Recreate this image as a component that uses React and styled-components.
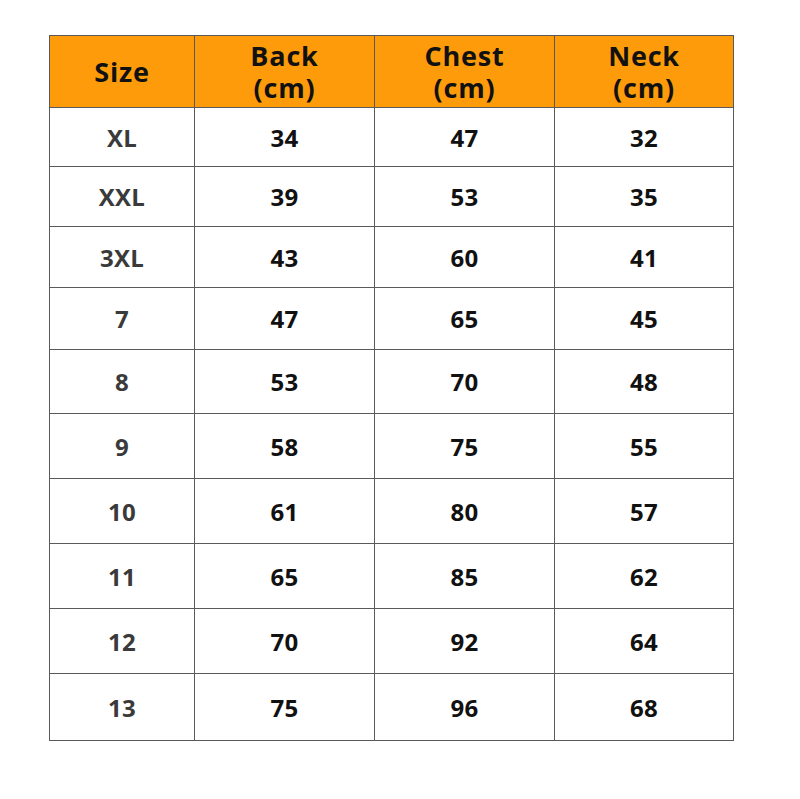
import React from 'react'
import styled, { createGlobalStyle } from 'styled-components'

const GlobalStyle = createGlobalStyle`
  html, body {
    margin: 0;
    padding: 0;
    background: #ffffff;
  }
  body {
    font-family: "Open Sans", "Noto Sans", "DejaVu Sans", sans-serif;
  }
`

const columns = [
  { label: 'Size', width: 145 },
  { label: 'Back\n(cm)', width: 180 },
  { label: 'Chest\n(cm)', width: 180 },
  { label: 'Neck\n(cm)', width: 179 },
]

// row heights creep up a little towards the bottom in the source image
const rows = [
  { size: 'XL', back: 34, chest: 47, neck: 32, h: 59 },
  { size: 'XXL', back: 39, chest: 53, neck: 35, h: 60 },
  { size: '3XL', back: 43, chest: 60, neck: 41, h: 61 },
  { size: '7', back: 47, chest: 65, neck: 45, h: 62 },
  { size: '8', back: 53, chest: 70, neck: 48, h: 64 },
  { size: '9', back: 58, chest: 75, neck: 55, h: 65 },
  { size: '10', back: 61, chest: 80, neck: 57, h: 65 },
  { size: '11', back: 65, chest: 85, neck: 62, h: 65 },
  { size: '12', back: 70, chest: 92, neck: 64, h: 65 },
  { size: '13', back: 75, chest: 96, neck: 68, h: 67 },
]

const App = () => {
  return (
    <Page>
      <GlobalStyle />
      <Chart>
        <colgroup>
          {columns.map(c => (
            <Col key={c.label} $w={c.width} />
          ))}
        </colgroup>
        <thead>
          <HeadRow>
            {columns.map(c => (
              <HeadCell key={c.label}>{c.label}</HeadCell>
            ))}
          </HeadRow>
        </thead>
        <tbody>
          {rows.map(r => (
            <Row key={r.size} $h={r.h}>
              <Cell $muted>{r.size}</Cell>
              <Cell>{r.back}</Cell>
              <Cell>{r.chest}</Cell>
              <Cell>{r.neck}</Cell>
            </Row>
          ))}
        </tbody>
      </Chart>
    </Page>
  )
}

const Page = styled.div`
  padding: 35px 0 0 49px;
  width: 800px;
  height: 799px;
  box-sizing: border-box;
`

const Chart = styled.table`
  border-collapse: collapse;
  table-layout: fixed;
  width: 684px;
  border: 1px solid #6a6a6a;
`

const Col = styled.col`
  width: ${p => p.$w}px;
`

const HeadRow = styled.tr`
  height: 72px;
  background: #fd9b0b;
`

const Row = styled.tr`
  height: ${p => p.$h}px;
`

const HeadCell = styled.th`
  border: 1px solid #5a5a5a;
  padding: 0;
  font-size: 27px;
  font-weight: 700;
  line-height: 32px;
  letter-spacing: 0.8px;
  color: #111;
  text-align: center;
  vertical-align: middle;
  white-space: pre-line;
`

const Cell = styled.td`
  border: 1px solid #5a5a5a;
  padding: 0;
  font-size: 24px;
  font-weight: 700;
  letter-spacing: 0.3px;
  color: ${p => (p.$muted ? '#3a3a3a' : '#111')};
  text-align: center;
  vertical-align: middle;
`

export default App
